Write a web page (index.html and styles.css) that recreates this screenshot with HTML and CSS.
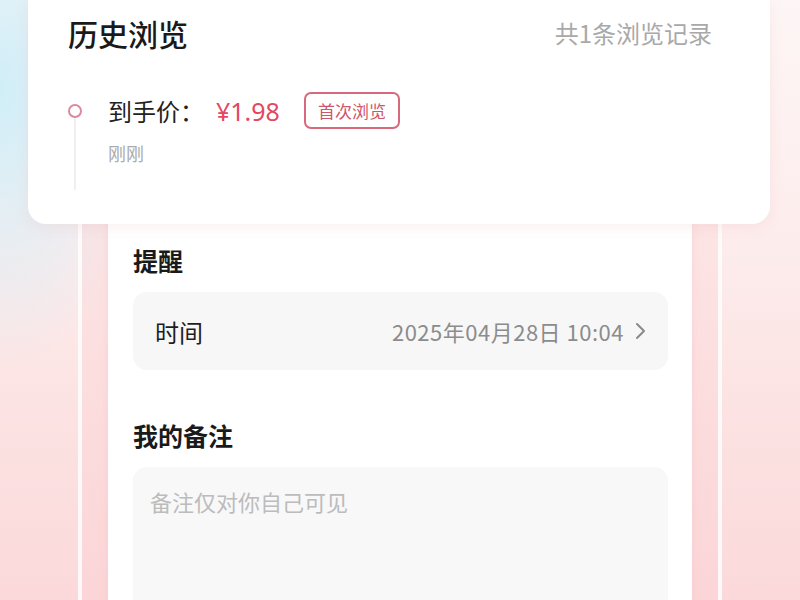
FILE: index.html
```html
<!DOCTYPE html>
<html lang="zh-CN">
<head>
<meta charset="utf-8">
<title>历史浏览</title>
<link rel="stylesheet" href="styles.css">
</head>
<body>
<div class="page">
  <section class="card">
    <header class="card-head">
      <h1 class="title">历史浏览</h1>
      <span class="count">共1条浏览记录</span>
    </header>
    <div class="timeline">
      <div class="rail">
        <span class="dot"></span>
        <span class="line"></span>
      </div>
      <div class="entry">
        <div class="price-row">
          <span class="label">到手价：</span>
          <span class="price">¥1.98</span>
          <span class="tag">首次浏览</span>
        </div>
        <div class="when">刚刚</div>
      </div>
    </div>
  </section>
  <div class="sheet">
    <div class="panel">
      <h2 class="section-title">提醒</h2>
      <div class="field">
        <span class="field-label">时间</span>
        <span class="field-value">2025年04月28日 10:04
          <svg class="chev" width="12" height="20" viewBox="0 0 12 20"><polyline points="3,3 10,10 3,17" fill="none" stroke="#8a8a8a" stroke-width="2" stroke-linecap="round" stroke-linejoin="round"/></svg>
        </span>
      </div>
      <h2 class="section-title note-title">我的备注</h2>
      <div class="note">备注仅对你自己可见</div>
    </div>
  </div>
</div>
</body>
</html>
```
FILE: styles.css
```css
* { box-sizing: border-box; }
html, body { margin: 0; padding: 0; }
body {
  font-family: "Noto Sans CJK SC", "Noto Sans", sans-serif;
  width: 800px;
  height: 600px;
  overflow: hidden;
}
.page {
  width: 800px;
  height: 600px;
  overflow: hidden;
  background:
    radial-gradient(ellipse 150px 280px at 0px 90px, rgba(208,238,248,1) 0%, rgba(214,240,248,0) 100%),
    linear-gradient(180deg, #fdf6f6 0%, #fdeeee 35%, #fce2e2 70%, #fbd9da 100%);
}
.card {
  position: relative;
  z-index: 2;
  margin: 0 30px 0 28px;
  height: 224px;
  background: #fff;
  border-radius: 0 0 18px 18px;
  box-shadow: 0 4px 14px rgba(230, 160, 165, 0.16);
  padding: 13px 58px 0 40px;
}
.card-head {
  display: flex;
  justify-content: space-between;
  align-items: center;
  height: 40px;
}
.title {
  margin: 0;
  font-size: 30px;
  font-weight: 500;
  color: #1a1a1a;
  line-height: 40px;
}
.count {
  font-size: 24px;
  color: #a9a9a9;
  line-height: 40px;
}
.timeline {
  display: flex;
  margin-top: 39px;
}
.rail {
  width: 14px;
  display: flex;
  flex-direction: column;
  align-items: center;
  padding-top: 12px;
}
.dot {
  width: 14px;
  height: 14px;
  border: 2px solid #db8c9c;
  border-radius: 50%;
  background: #fff;
  flex: none;
}
.line {
  width: 2px;
  height: 72px;
  background: #efefef;
}
.entry {
  margin-left: 26px;
}
.price-row {
  display: flex;
  align-items: center;
  height: 37px;
}
.label {
  font-size: 24px;
  color: #222;
}
.price {
  font-family: "Noto Sans", "Noto Sans CJK SC", sans-serif;
  font-size: 25px;
  color: #e54660;
  margin-left: 12px;
}
.tag {
  margin-left: 24px;
  height: 37px;
  border: 2px solid #d8697c;
  border-radius: 7px;
  padding: 0 12px;
  font-size: 17px;
  line-height: 33px;
  color: #d0566b;
}
.when {
  margin-top: 12px;
  font-size: 18px;
  line-height: 24px;
  color: #ababab;
}
.sheet {
  position: relative;
  z-index: 1;
  margin: -40px 78px 0 78px;
  border-left: 4px solid rgba(255,255,255,0.85);
  border-right: 4px solid rgba(255,255,255,0.85);
  padding: 0 26px;
  height: 420px;
  background: rgba(250, 205, 208, 0.25);
}
.panel {
  background: #fff;
  height: 100%;
  padding: 60px 24px 0 25px;
  box-shadow: 0 0 8px rgba(245, 190, 195, 0.4);
}
.section-title {
  margin: 0;
  font-size: 25px;
  font-weight: 700;
  line-height: 32px;
  color: #1a1a1a;
}
.field {
  margin-top: 16px;
  height: 78px;
  background: #f7f7f7;
  border-radius: 14px;
  display: flex;
  align-items: center;
  justify-content: space-between;
  padding: 0 22px 0 22px;
}
.field-label {
  font-size: 24px;
  color: #1e1e1e;
}
.field-value {
  display: flex;
  align-items: center;
  font-size: 22px;
  letter-spacing: 0.5px;
  color: #8c8c8c;
}
.chev {
  margin-left: 10px;
}
.note-title {
  margin-top: 49px;
}
.note {
  margin-top: 16px;
  height: 200px;
  background: #f8f8f8;
  border-radius: 14px;
  padding: 18px 17px;
  font-size: 22px;
  line-height: 32px;
  color: #bcbcbc;
}
```
